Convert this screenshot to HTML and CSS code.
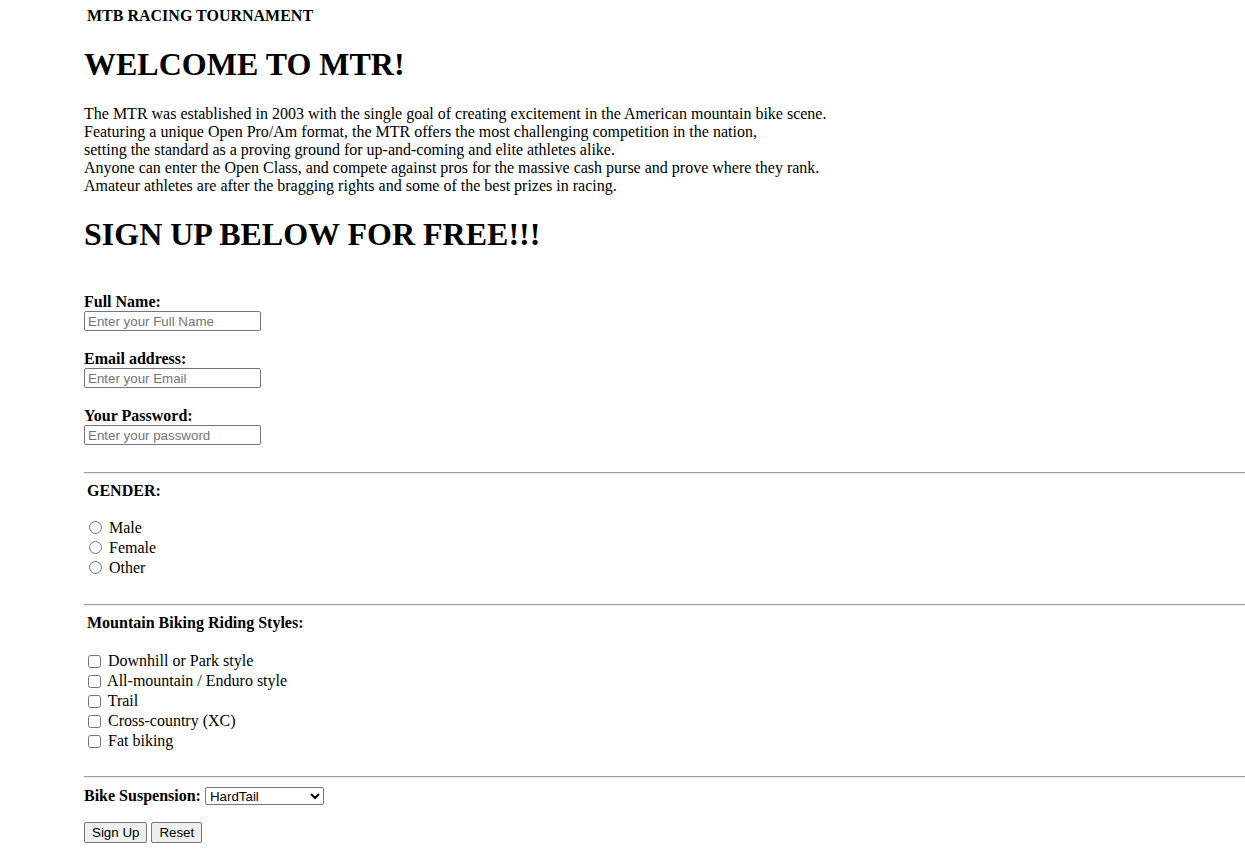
FILE: index.html
```html
<!DOCTYPE html>
<html>
<head>
<meta charset="utf-8">
<title>MTR</title>
<link rel="stylesheet" href="styles.css">
</head>
<body>
<header class="brand">MTB RACING TOURNAMENT</header>
<h1 class="title welcome">WELCOME TO MTR!</h1>
<p class="intro">The MTR was established in 2003 with the single goal of creating excitement in the American mountain bike scene.<br>
Featuring a unique Open Pro/Am format, the MTR offers the most challenging competition in the nation,<br>
setting the standard as a proving ground for up-and-coming and elite athletes alike.<br>
Anyone can enter the Open Class, and compete against pros for the massive cash purse and prove where they rank.<br>
Amateur athletes are after the bragging rights and some of the best prizes in racing.</p>
<h1 class="title signup">SIGN UP BELOW FOR FREE!!!</h1>
<form class="form">
  <div class="field">
    <label class="lbl" for="fn">Full Name:</label>
    <input class="txt" id="fn" type="text" placeholder="Enter your Full Name">
  </div>
  <div class="field">
    <label class="lbl" for="em">Email address:</label>
    <input class="txt" id="em" type="email" placeholder="Enter your Email">
  </div>
  <div class="field">
    <label class="lbl" for="pw">Your Password:</label>
    <input class="txt" id="pw" type="password" placeholder="Enter your password">
  </div>
  <hr class="rule rule-first">
  <div class="group-title">GENDER:</div>
  <div class="options">
    <div class="opt"><input type="radio" name="g" class="radio"> Male</div>
    <div class="opt"><input type="radio" name="g" class="radio"> Female</div>
    <div class="opt"><input type="radio" name="g" class="radio"> Other</div>
  </div>
  <hr class="rule rule-second">
  <div class="group-title">Mountain Biking Riding Styles:</div>
  <div class="options options-checks">
    <div class="opt"><input type="checkbox" class="check"> Downhill or Park style</div>
    <div class="opt"><input type="checkbox" class="check"> All-mountain / Enduro style</div>
    <div class="opt"><input type="checkbox" class="check"> Trail</div>
    <div class="opt"><input type="checkbox" class="check"> Cross-country (XC)</div>
    <div class="opt"><input type="checkbox" class="check"> Fat biking</div>
  </div>
  <hr class="rule rule-third">
  <div class="suspension">
    <label class="lbl-inline" for="sus">Bike Suspension:</label>
    <select id="sus" class="sel">
      <option>HardTail</option>
      <option>Full Suspension</option>
      <option>Rigid</option>
    </select>
  </div>
  <div class="actions">
    <button type="submit" class="btn">Sign Up</button>
    <button type="reset" class="btn">Reset</button>
  </div>
</form>
</body>
</html>
```
FILE: styles.css
```css
html, body {
  margin: 0;
  padding: 0;
  background: #fff;
}
body {
  padding-left: 84px;
  padding-top: 1px;
  font-family: "Liberation Serif", "Times New Roman", serif;
  font-size: 16px;
  line-height: 18px;
  color: #000;
}
.brand {
  margin-top: 6px;
  padding-left: 3px;
  font-weight: bold;
  font-size: 16px;
  line-height: 18px;
}
.title {
  font-size: 32px;
  font-weight: bold;
  line-height: 37px;
  margin: 0;
}
.welcome {
  margin-top: 21px;
}
.intro {
  margin: 22px 0 0 0;
  line-height: 18px;
}
.signup {
  margin-top: 21px;
}
.form {
  margin-top: 40px;
}
.field {
  display: flex;
  flex-direction: column;
  align-items: flex-start;
  margin-bottom: 19px;
}
.lbl {
  font-weight: bold;
  line-height: 18px;
  height: 18px;
}
.txt {
  box-sizing: border-box;
  width: 177px;
  height: 20px;
  margin: 0;
  padding: 1px 3px;
  border: 1px solid #767676;
  border-radius: 2px;
  font-family: "Liberation Sans", Arial, sans-serif;
  font-size: 13.33px;
}
.txt::placeholder {
  color: #757575;
}
.rule {
  border: 0;
  border-top: 1px solid #9a9a9a;
  border-bottom: 1px solid #eeeeee;
  height: 0;
  margin: 0;
}
.rule-first {
  margin-top: 27px;
}
.group-title {
  padding-left: 3px;
  font-weight: bold;
  margin-top: 8px;
  line-height: 18px;
}
.options {
  margin-top: 18px;
}
.options-checks {
  margin-top: 19px;
}
.opt {
  height: 20px;
  line-height: 20px;
}
.radio {
  margin: 3px 3px 0 5px;
  vertical-align: -1px;
}
.check {
  margin: 3px 3px 3px 4px;
  vertical-align: -2px;
}
.rule-second {
  margin-top: 26px;
}
.rule-third {
  margin-top: 25px;
}
.suspension {
  margin-top: 9px;
  display: flex;
  align-items: center;
  gap: 4px;
}
.lbl-inline {
  font-weight: bold;
}
.sel {
  width: 119px;
  height: 18px;
  font-family: "Liberation Sans", Arial, sans-serif;
  font-size: 13.33px;
  border: 1px solid #767676;
  border-radius: 2px;
  background: #fff;
  padding: 0;
}
.actions {
  margin-top: 17px;
  display: flex;
  gap: 4px;
}
.btn {
  font-family: "Liberation Sans", Arial, sans-serif;
  font-size: 13.33px;
  height: 21px;
  padding: 1px 7px;
  border: 1px solid #767676;
  border-radius: 2px;
  background: #efefef;
  color: #000;
}
```
